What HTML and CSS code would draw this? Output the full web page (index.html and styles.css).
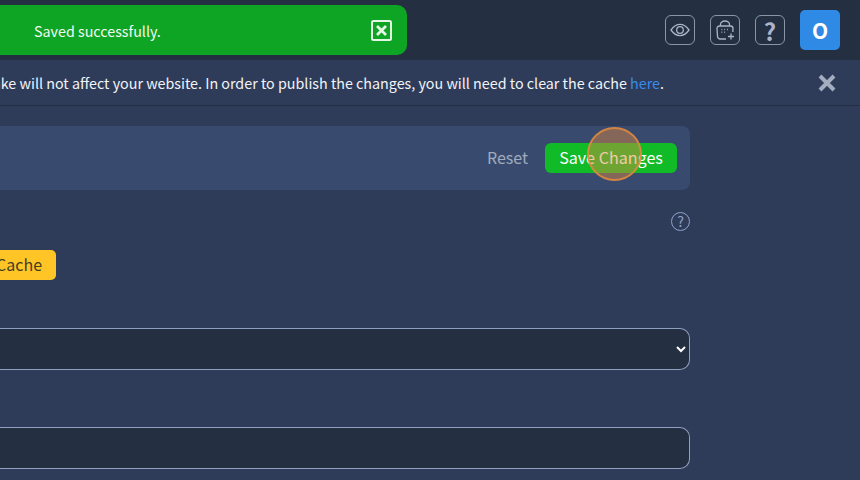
FILE: index.html
```html
<!DOCTYPE html>
<html lang="en">
<head>
    <meta charset="UTF-8">
    <meta name="viewport" content="width=device-width, initial-scale=1.0">
    <title>Cache Settings</title>
    <link rel="stylesheet" href="styles.css">
</head>
<body>

    <header class="topbar">
        <a class="icon-button" href="#">
            <svg width="20" height="20" viewBox="0 0 20 20" fill="none" stroke="#aab5c9" stroke-width="1.300">
                <path d="M1 10c2.700-3.800 5.700-5.600 9-5.600s6.300 1.800 9 5.600c-2.700 3.800-5.700 5.600-9 5.600S3.700 13.800 1 10z"/>
                <circle cx="10" cy="10" r="3.300"/>
            </svg>
        </a>
        <a class="icon-button" href="#">
            <svg width="22" height="22" viewBox="0 0 22 22" fill="none" stroke="#aab5c9" stroke-width="1.300">
                <path d="M6.500 7V5.500a4.500 3.500 0 0 1 9 0V7"/>
                <path d="M12 20H6.500a3 3 0 0 1-3-2.800L3 9.500A2.500 2.500 0 0 1 5.500 7h11A2.500 2.500 0 0 1 19 9.500l-.2 3.500"/>
                <path d="M17 14.500v6M14 17.500h6"/>
                <path d="M7.500 10.500h.8M10.300 10.500h.8M13.100 10.500h.8M7.500 13.300h.8M10.300 13.300h.8" stroke-width="1.500"/>
            </svg>
        </a>
        <a class="icon-button icon-help" href="#">?</a>
        <a class="avatar" href="#">O</a>
    </header>

    <div class="toast">
        <span class="toast-text">Saved successfully.</span>
        <button class="toast-close">
            <svg width="21" height="21" viewBox="0 0 21 21" fill="none" stroke="#e6f5e6">
                <rect x="1" y="1" width="19" height="19" rx="1.500" stroke-width="2"/>
                <path d="M6 6l9 9M15 6l-9 9" stroke-width="2.800"/>
            </svg>
        </button>
    </div>

    <div class="notice">
        <p class="notice-text">Any changes you make will not affect your website. In order to publish the changes, you will need to clear the cache <a href="#">here</a>.</p>
        <button class="notice-close">
            <svg width="18" height="18" viewBox="0 0 18 18" fill="none" stroke="#a3adbf" stroke-width="4">
                <path d="M2 2l14 14M16 2L2 16"/>
            </svg>
        </button>
    </div>

    <main class="content">
        <div class="action-bar">
            <button class="btn-reset">Reset</button>
            <button class="btn-save">Save Changes</button>
        </div>

        <div class="help-row">
            <span class="help-circle">?</span>
        </div>

        <button class="btn-cache">Clear Cache</button>

        <div class="field field-select">
            <select class="input">
                <option></option>
            </select>
        </div>

        <div class="field field-text">
            <input class="input" type="text">
        </div>
    </main>

    <div class="click-marker"></div>

</body>
</html>
```

FILE: styles.css
```css
* {
    box-sizing: border-box;
}

html, body {
    height: 100%;
}

body {
    margin: 0;
    height: 480px;
    overflow: hidden;
    position: relative;
    background-color: #2e3c5a;
    color: #fff;
    font-family: 'Noto Sans CJK SC', 'Noto Sans', sans-serif;
    font-size: 16px;
}

button {
    font-family: inherit;
    border: none;
    cursor: pointer;
}

.topbar {
    height: 60px;
    background-color: #242f42;
    display: flex;
    justify-content: flex-end;
    align-items: center;
    gap: 15px;
    padding-right: 20px;
}

.icon-button {
    width: 30px;
    height: 30px;
    border: 1px solid #8a95a8;
    border-radius: 6px;
    display: flex;
    align-items: center;
    justify-content: center;
    color: #aab5c9;
    text-decoration: none;
}

.icon-help {
    font-size: 24px;
    font-weight: 700;
}

.avatar {
    width: 40px;
    height: 40px;
    border-radius: 5px;
    background-color: #2f8ae6;
    color: #fff;
    display: flex;
    align-items: center;
    justify-content: center;
    font-size: 21px;
    font-weight: 700;
    text-decoration: none;
}

.toast {
    position: absolute;
    left: -20px;
    top: 5px;
    width: 427px;
    height: 50px;
    padding: 0 15px 0 54px;
    background-color: #0ea424;
    border-radius: 10px;
    display: flex;
    align-items: center;
    justify-content: space-between;
}

.toast-text {
    font-size: 14.300px;
    color: #f2faf2;
}

.toast-close {
    background: none;
    padding: 0;
    display: flex;
}

.notice {
    height: 46px;
    background-color: #2e3c5a;
    border-bottom: 1px solid #232e42;
    display: flex;
    align-items: center;
    justify-content: flex-end;
    padding-right: 24px;
    position: relative;
}

.notice-text {
    position: absolute;
    right: 196px;
    margin: 0;
    font-size: 14.300px;
    white-space: nowrap;
    color: #f2f4f8;
}

.notice-text a {
    color: #3b8be8;
    text-decoration: none;
}

.notice-close {
    background: none;
    padding: 0;
    display: flex;
}

.content {
    width: 690px;
    padding-top: 20px;
}

.action-bar {
    height: 64px;
    background-color: #384b6f;
    border-radius: 0 8px 8px 0;
    display: flex;
    align-items: center;
    justify-content: flex-end;
    gap: 17px;
    padding-right: 13px;
}

.btn-reset {
    background: none;
    color: #a0abbe;
    font-size: 16px;
    padding: 0 0 2px;
}

.btn-save {
    width: 132px;
    height: 30px;
    background-color: #10bb27;
    color: #fff;
    font-size: 16.100px;
    border-radius: 6px;
    padding: 0 0 2px;
}

.help-row {
    display: flex;
    justify-content: flex-end;
    margin-top: 22px;
}

.help-circle {
    width: 19px;
    height: 19px;
    border: 1.500px solid #8fa3c8;
    border-radius: 50%;
    color: #8fa3c8;
    font-size: 14px;
    line-height: 16px;
    text-align: center;
}

.btn-cache {
    display: block;
    margin-top: 19px;
    margin-left: -60px;
    width: 116px;
    height: 30px;
    background-color: #ffc527;
    color: #453c22;
    font-size: 16px;
    border-radius: 5px;
    padding: 0 0 2px;
}

.field-select {
    margin-top: 48px;
}

.field-text {
    margin-top: 57px;
}

.input {
    display: block;
    width: 100%;
    height: 42px;
    margin: 0;
    background-color: #242f42;
    border: 1px solid #8fa0bf;
    border-left: none;
    border-radius: 0 10px 10px 0;
    color: #fff;
}

.click-marker {
    position: absolute;
    left: 587px;
    top: 127px;
    width: 55px;
    height: 54px;
    border: 2px solid rgba(226, 137, 62, 0.85);
    border-radius: 50%;
    background-color: rgba(226, 137, 62, 0.45);
}
```
